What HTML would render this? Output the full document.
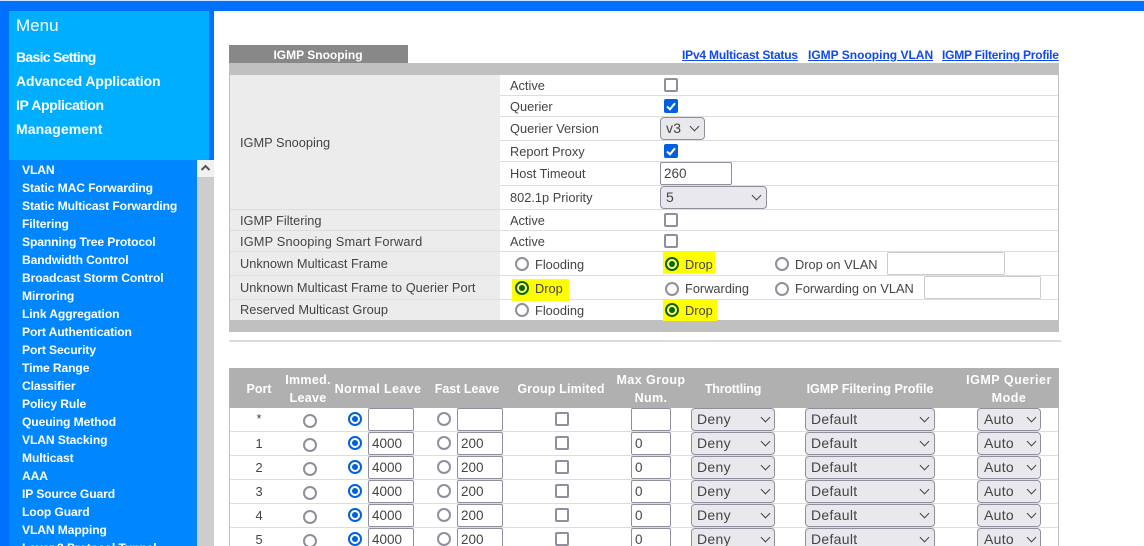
<!DOCTYPE html>
<html><head><meta charset="utf-8"><title>IGMP Snooping</title>
<style>
html,body{margin:0;padding:0;width:1144px;height:546px;overflow:hidden;background:#fff}
body{position:relative;font-family:"Liberation Sans",sans-serif;color:#444;font-size:12.8px}
div,span,a{position:absolute;box-sizing:border-box}
.t{white-space:nowrap;line-height:20px;height:20px}
.c{transform:translateX(-50%);text-align:center}
.m{color:#fff;font-weight:bold;font-size:14px;left:16px}
.l{color:#fff;font-weight:bold;font-size:12.1px;left:22px;letter-spacing:-.1px}
.lk{color:#0f49ee;font-weight:bold;font-size:12px;text-decoration:underline;top:45px;white-space:nowrap;line-height:20px}
.h{color:#fff;font-weight:bold;font-size:12.5px;line-height:18px;white-space:nowrap}
.sep{left:230px;width:828px;height:1px;background:#ddd}
.cb{width:14px;height:14px;border:2px solid #8f8f9d;border-radius:2px;background:#fff}
.cb.on{background:#0060df;border-color:#0060df}
.cb svg{position:absolute;left:-2px;top:-2px}
.rd{width:14px;height:14px;border:2px solid #8f8f9d;border-radius:50%;background:#fff}
.rd.on{border-color:#0060df}
.rd.on::after{content:"";position:absolute;left:2px;top:2px;width:6px;height:6px;border-radius:50%;background:#0060df}
.rd.g{border-color:#0a6400;background:#ffff80}
.rd.g::after{content:"";position:absolute;left:2px;top:2px;width:6px;height:6px;border-radius:50%;background:#0a6400}
.in{height:23px;border:1px solid #8f8f9d;border-radius:2px;background:#fff;color:#444;font-size:13.5px;line-height:21px;padding-left:3px;white-space:nowrap}
.in.lt{border-color:#ccc}
.sl{height:23px;border:1px solid #8f8f9d;border-radius:4px;background:#e9e9ed;color:#444;font-size:14px;line-height:21px;padding-left:5px;letter-spacing:.3px;white-space:nowrap}
.sl i{position:absolute;top:5px;width:6px;height:6px;border-right:1.4px solid #444;border-bottom:1.4px solid #444;transform:rotate(45deg)}
.y{background:#ffff00}
.r{left:0;width:1144px;height:24px}
.p{left:259px;top:1px;transform:translateX(-50%);line-height:20px;color:#444}
.a{left:303px;top:6px}.b{left:348px;top:4px}.d{left:437px;top:4px}
.e{left:368px;top:0;width:46px}.f{left:457px;top:0;width:46px}.g2{left:631px;top:0;width:40px}
.k{left:555px;top:4px}
.s1{left:691px;top:0;width:84px}.s1 i{left:70px}
.s2{left:805px;top:0;width:130px}.s2 i{left:115px}
.s3{left:977px;top:0;width:64px;padding-left:6px}.s3 i{left:50px}
</style></head>
<body>
<div style="left:0;top:0;width:1144px;height:11px;background:#0070ff"></div>
<div style="left:0;top:0;width:1144px;height:1px;background:#cfe2ff"></div>
<div style="left:0;top:11px;width:214px;height:535px;background:#0070ff"></div>
<div style="left:9px;top:11px;width:200px;height:149px;background:#00aeff"></div>
<div style="left:9px;top:160px;width:188px;height:386px;background:#0086ff"></div>
<div style="left:197px;top:160px;width:17px;height:386px;background:#cdcdcd"></div>
<div style="left:197px;top:160px;width:17px;height:17px;background:#f1f1f1"></div>
<svg style="position:absolute;left:200px;top:164px" width="11" height="8"><path d="M1.5 6 L5.5 2 L9.5 6" fill="none" stroke="#555" stroke-width="2"/></svg>

<div class="t" style="left:16px;top:16px;color:#fff;font-size:17px">Menu</div>
<div class="t m" style="top:47px;letter-spacing:-.7px">Basic Setting</div>
<div class="t m" style="top:71px;letter-spacing:-.1px">Advanced Application</div>
<div class="t m" style="top:95px;letter-spacing:-.35px">IP Application</div>
<div class="t m" style="top:119px;letter-spacing:.1px">Management</div>

<div class="t l" style="top:160px">VLAN</div>
<div class="t l" style="top:178px">Static MAC Forwarding</div>
<div class="t l" style="top:196px">Static Multicast Forwarding</div>
<div class="t l" style="top:214px">Filtering</div>
<div class="t l" style="top:232px">Spanning Tree Protocol</div>
<div class="t l" style="top:250px">Bandwidth Control</div>
<div class="t l" style="top:268px">Broadcast Storm Control</div>
<div class="t l" style="top:286px">Mirroring</div>
<div class="t l" style="top:304px">Link Aggregation</div>
<div class="t l" style="top:322px">Port Authentication</div>
<div class="t l" style="top:340px">Port Security</div>
<div class="t l" style="top:358px">Time Range</div>
<div class="t l" style="top:376px">Classifier</div>
<div class="t l" style="top:394px">Policy Rule</div>
<div class="t l" style="top:412px">Queuing Method</div>
<div class="t l" style="top:430px">VLAN Stacking</div>
<div class="t l" style="top:448px">Multicast</div>
<div class="t l" style="top:466px">AAA</div>
<div class="t l" style="top:484px">IP Source Guard</div>
<div class="t l" style="top:502px">Loop Guard</div>
<div class="t l" style="top:520px">VLAN Mapping</div>
<div class="t l" style="top:538px">Layer 2 Protocol Tunnel</div>

<!-- Tab & links -->
<div style="left:229px;top:45px;width:179px;height:18px;background:#888"></div>
<div class="t c" style="left:318px;top:45px;color:#fff;font-weight:bold;font-size:12px">IGMP Snooping</div>
<a class="lk" style="left:682px;letter-spacing:-.2px">IPv4 Multicast Status</a>
<a class="lk" style="left:808px">IGMP Snooping VLAN</a>
<a class="lk" style="left:942px;letter-spacing:-.23px">IGMP Filtering Profile</a>

<!-- Table 1 -->
<div style="left:229px;top:63px;width:830px;height:12px;background:#c0c0c0"></div>
<div style="left:229px;top:75px;width:1px;height:245px;background:#c0c0c0"></div>
<div style="left:1058px;top:75px;width:1px;height:245px;background:#c0c0c0"></div>
<div style="left:230px;top:75px;width:270px;height:245px;background:#ececec"></div>
<div class="sep" style="left:500px;width:558px;top:95px"></div>
<div class="sep" style="left:500px;width:558px;top:116px"></div>
<div class="sep" style="left:500px;width:558px;top:140px"></div>
<div class="sep" style="left:500px;width:558px;top:161px"></div>
<div class="sep" style="left:500px;width:558px;top:185px"></div>
<div class="sep" style="top:209px"></div>
<div class="sep" style="top:230px"></div>
<div class="sep" style="top:251px"></div>
<div class="sep" style="top:275px"></div>
<div class="sep" style="top:299px"></div>
<div style="left:229px;top:320px;width:830px;height:12px;background:#c0c0c0"></div>
<div style="left:229px;top:340px;width:832px;height:2px;background:#ddd"></div>

<div class="t" style="left:240px;top:133px">IGMP Snooping</div>
<div class="t" style="left:240px;top:211px">IGMP Filtering</div>
<div class="t" style="left:240px;top:232px;letter-spacing:.15px">IGMP Snooping Smart Forward</div>
<div class="t" style="left:240px;top:254px">Unknown Multicast Frame</div>
<div class="t" style="left:240px;top:278px">Unknown Multicast Frame to Querier Port</div>
<div class="t" style="left:240px;top:300px">Reserved Multicast Group</div>

<div class="t" style="left:510px;top:76px">Active</div>
<div class="t" style="left:510px;top:97px">Querier</div>
<div class="t" style="left:510px;top:119px">Querier Version</div>
<div class="t" style="left:510px;top:142px">Report Proxy</div>
<div class="t" style="left:510px;top:164px">Host Timeout</div>
<div class="t" style="left:510px;top:188px">802.1p Priority</div>
<div class="t" style="left:510px;top:211px">Active</div>
<div class="t" style="left:510px;top:232px">Active</div>

<div class="cb" style="left:664px;top:78px"></div>
<div class="cb on" style="left:664px;top:99px"><svg width="14" height="14"><path d="M3 7.5 L6 10.3 L11 4.2" fill="none" stroke="#fff" stroke-width="2"/></svg></div>
<div class="sl" style="left:660px;top:117px;width:45px">v3<i style="left:30px"></i></div>
<div class="cb on" style="left:664px;top:144px"><svg width="14" height="14"><path d="M3 7.5 L6 10.3 L11 4.2" fill="none" stroke="#fff" stroke-width="2"/></svg></div>
<div class="in" style="left:660px;top:162px;width:72px">260</div>
<div class="sl" style="left:660px;top:186px;width:107px">5<i style="left:92px"></i></div>
<div class="cb" style="left:664px;top:213px"></div>
<div class="cb" style="left:664px;top:234px"></div>

<!-- Yellow highlights -->
<div class="y" style="left:663px;top:252px;width:52px;height:22px"></div>
<div class="y" style="left:512px;top:279px;width:57px;height:22px"></div>
<div class="y" style="left:663px;top:300px;width:54px;height:21px"></div>

<div class="rd" style="left:515px;top:257px"></div>
<div class="t" style="left:535px;top:255px">Flooding</div>
<div class="rd g" style="left:665px;top:257px"></div>
<div class="t" style="left:685px;top:255px">Drop</div>
<div class="rd" style="left:775px;top:257px"></div>
<div class="t" style="left:795px;top:255px">Drop on VLAN</div>
<div class="in lt" style="left:887px;top:252px;width:118px"></div>

<div class="rd g" style="left:515px;top:281px"></div>
<div class="t" style="left:535px;top:279px">Drop</div>
<div class="rd" style="left:665px;top:282px"></div>
<div class="t" style="left:685px;top:279px">Forwarding</div>
<div class="rd" style="left:775px;top:282px"></div>
<div class="t" style="left:795px;top:279px">Forwarding on VLAN</div>
<div class="in lt" style="left:924px;top:276px;width:117px"></div>

<div class="rd" style="left:515px;top:303px"></div>
<div class="t" style="left:535px;top:301px">Flooding</div>
<div class="rd g" style="left:665px;top:303px"></div>
<div class="t" style="left:685px;top:301px">Drop</div>

<!-- Table 2 -->
<div style="left:229px;top:368px;width:830px;height:40px;background:#b0b0b0"></div>
<div style="left:229px;top:408px;width:1px;height:138px;background:#c0c0c0"></div>
<div style="left:1058px;top:408px;width:1px;height:138px;background:#c0c0c0"></div>
<div class="h c" style="left:259px;top:380px">Port</div>
<div class="h c" style="left:308px;top:371px;letter-spacing:.3px">Immed.<br>Leave</div>
<div class="h c" style="left:378px;top:380px;letter-spacing:.4px">Normal Leave</div>
<div class="h c" style="left:467px;top:380px">Fast Leave</div>
<div class="h c" style="left:561px;top:380px;letter-spacing:.15px">Group Limited</div>
<div class="h c" style="left:651px;top:371px;letter-spacing:.4px">Max Group<br>Num.</div>
<div class="h c" style="left:733px;top:380px;letter-spacing:-.2px">Throttling</div>
<div class="h c" style="left:870px;top:380px">IGMP Filtering Profile</div>
<div class="h c" style="left:1009px;top:371px;letter-spacing:.5px">IGMP Querier<br>Mode</div>

<div class="sep" style="top:431px"></div>
<div class="sep" style="top:455px"></div>
<div class="sep" style="top:479px"></div>
<div class="sep" style="top:503px"></div>
<div class="sep" style="top:527px"></div>

<div class="r" style="top:408px"><span class="p">*</span><div class="rd a"></div><div class="rd on b"></div><div class="in e"></div><div class="rd d"></div><div class="in f"></div><div class="cb k"></div><div class="in g2"></div><div class="sl s1">Deny<i></i></div><div class="sl s2">Default<i></i></div><div class="sl s3">Auto<i></i></div></div>
<div class="r" style="top:432px"><span class="p" style="top:2px">1</span><div class="rd a"></div><div class="rd on b"></div><div class="in e">4000</div><div class="rd d"></div><div class="in f">200</div><div class="cb k"></div><div class="in g2">0</div><div class="sl s1">Deny<i></i></div><div class="sl s2">Default<i></i></div><div class="sl s3">Auto<i></i></div></div>
<div class="r" style="top:456px"><span class="p" style="top:2px">2</span><div class="rd a"></div><div class="rd on b"></div><div class="in e">4000</div><div class="rd d"></div><div class="in f">200</div><div class="cb k"></div><div class="in g2">0</div><div class="sl s1">Deny<i></i></div><div class="sl s2">Default<i></i></div><div class="sl s3">Auto<i></i></div></div>
<div class="r" style="top:480px"><span class="p" style="top:2px">3</span><div class="rd a"></div><div class="rd on b"></div><div class="in e">4000</div><div class="rd d"></div><div class="in f">200</div><div class="cb k"></div><div class="in g2">0</div><div class="sl s1">Deny<i></i></div><div class="sl s2">Default<i></i></div><div class="sl s3">Auto<i></i></div></div>
<div class="r" style="top:504px"><span class="p" style="top:2px">4</span><div class="rd a"></div><div class="rd on b"></div><div class="in e">4000</div><div class="rd d"></div><div class="in f">200</div><div class="cb k"></div><div class="in g2">0</div><div class="sl s1">Deny<i></i></div><div class="sl s2">Default<i></i></div><div class="sl s3">Auto<i></i></div></div>
<div class="r" style="top:528px"><span class="p" style="top:2px">5</span><div class="rd a"></div><div class="rd on b"></div><div class="in e">4000</div><div class="rd d"></div><div class="in f">200</div><div class="cb k"></div><div class="in g2">0</div><div class="sl s1">Deny<i></i></div><div class="sl s2">Default<i></i></div><div class="sl s3">Auto<i></i></div></div>
</body></html>
